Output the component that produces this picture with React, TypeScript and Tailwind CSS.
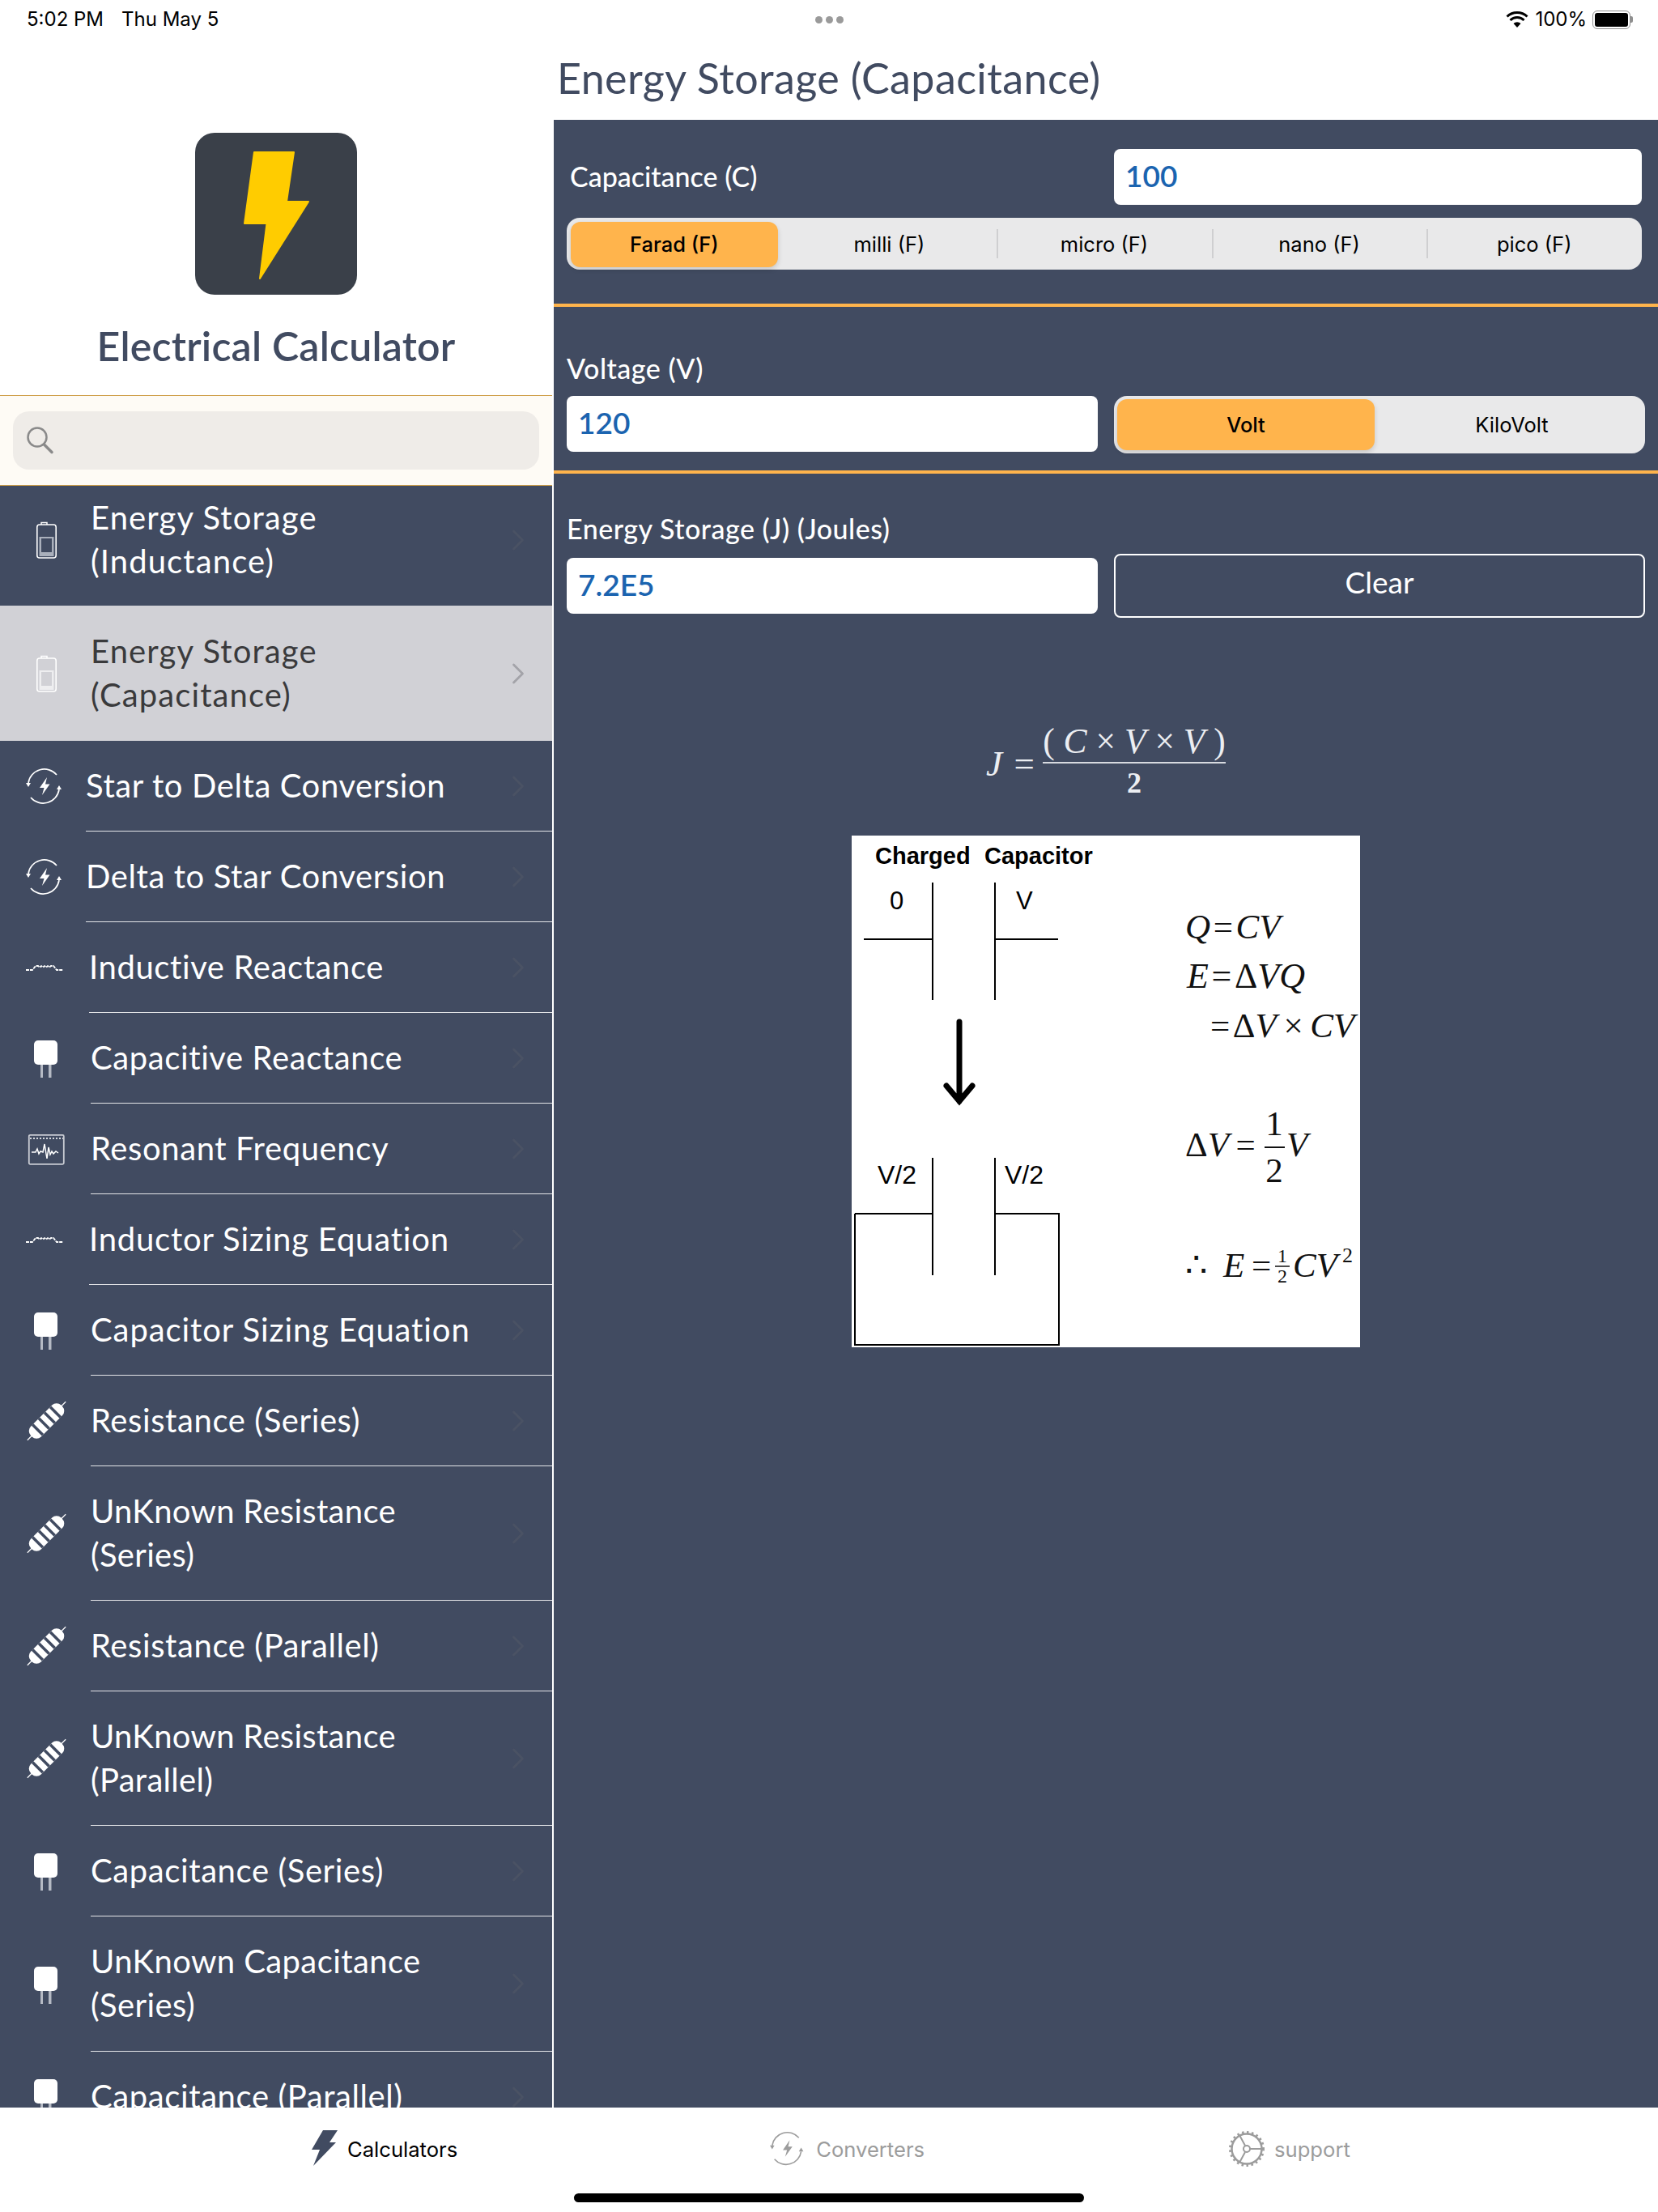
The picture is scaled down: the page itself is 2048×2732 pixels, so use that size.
import React from "react";
import { ChevronRight } from "lucide-react";

const sans = "font-['Lato','Noto_Sans',sans-serif]";
const ui = "font-['Inter','Liberation_Sans',sans-serif]";
const tex = "font-['Liberation_Serif','DejaVu_Serif',serif]";

const BatteryIcon = ({ selected }: { selected?: boolean }) => (
  <svg width="51" height="50" viewBox="0 0 51 50" fill="none">
    <path d="M19 6v-2.500h7V6" stroke="#fff" strokeWidth="1.500" />
    <rect x="13.800" y="6" width="23.400" height="41" rx="3" stroke="#fff" strokeWidth="1.600" />
    <rect x="16.500" y="21" width="18" height="24" fill={selected ? "#eeeef0" : "#aab0bc"} />
    <rect x="19" y="23" width="13" height="17" fill={selected ? "#d1d1d6" : "#414b61"} />
  </svg>
);

const CycleBolt = ({ color = "#fff", size = 51 }: { color?: string; size?: number }) => (
  <svg width={size} height={size * 50 / 51} viewBox="0 0 51 50" fill="none">
    <path d="M3 21a20 20 0 0 1 35-10" stroke={color} strokeWidth="1.700" />
    <path d="M41 29a20 20 0 0 1-35 10" stroke={color} strokeWidth="1.700" />
    <path d="M0 21h6l-3 5zM38 29h6l-3-5z" fill={color} />
    <path d="M26 14l-9 13h5.500l-2.500 9 9.500-13.500h-5.500z" fill={color} />
  </svg>
);

const CoilIcon = () => (
  <svg width="51" height="50" viewBox="0 0 51 50" fill="none">
    <path d="M0 28h8l4-5h3l2 1.500 2-1.500 2 1.500 2-1.500 2 1.500 2-1.500 2 1.500 2-1.500h3l4 5h8" stroke="#fff" strokeWidth="1.800" strokeDasharray="4 1" />
  </svg>
);

const CapacitorIcon = () => (
  <svg width="51" height="50" viewBox="0 0 51 50" fill="none">
    <rect x="10" y="3" width="29" height="30" rx="5" fill="#fff" />
    <rect x="18" y="33" width="3" height="16" fill="#b5bac4" />
    <rect x="28" y="33" width="3.500" height="16" fill="#b5bac4" />
  </svg>
);

const ScopeIcon = () => (
  <svg width="51" height="50" viewBox="0 0 51 50" fill="none">
    <rect x="3.800" y="7.800" width="43" height="36" rx="1.500" stroke="#c9ccd3" strokeWidth="1.800" />
    <path d="M5 12h41" stroke="#d5d8de" strokeWidth="2" strokeDasharray="2 2" />
    <path d="M7 29h5l2-4 2 6 2-3 3 1 2-10 3 18 2-14 2 9 2-4 2 3 3-3 3 2" stroke="#fff" strokeWidth="1.500" />
  </svg>
);

const ResistorIcon = () => (
  <svg width="51" height="52" viewBox="0 0 51 52" fill="none">
    <g transform="rotate(-45 25.500 26)">
      <path d="M-8 26h67" stroke="#fff" strokeWidth="1.300" />
      <rect x="-1" y="17" width="53" height="18" rx="8" fill="#fff" />
      <path d="M10 17v18M21 17v18M31 17v18M41 17v18" stroke="#414b61" strokeWidth="3.500" />
    </g>
  </svg>
);

const SearchGlass = () => (
  <svg width="38" height="38" viewBox="0 0 38 38" fill="none" stroke="#8a8a8a">
    <circle cx="15" cy="15" r="11.500" strokeWidth="2.500" />
    <path d="M23.500 24L33 33.500" strokeWidth="3.500" strokeLinecap="round" />
  </svg>
);

type Row = {
  lines: string[];
  icon: string;
  slot: string;
  height: string;
  track?: string;
  selected?: boolean;
  noLine?: boolean;
};

const rows: Row[] = [
  { lines: ["Energy Storage", "(Inductance)"], icon: "battery", slot: "w-[112px]", height: "h-[162px]", track: "tracking-[1.1px]", noLine: true },
  { lines: ["Energy Storage", "(Capacitance)"], icon: "battery", slot: "w-[112px]", height: "h-[167px]", track: "tracking-[1.1px]", selected: true, noLine: true },
  { lines: ["Star to Delta Conversion"], icon: "cycle", slot: "w-[106px]", height: "h-[112px]" },
  { lines: ["Delta to Star Conversion"], icon: "cycle", slot: "w-[106px]", height: "h-[112px]" },
  { lines: ["Inductive Reactance"], icon: "coil", slot: "w-[110px]", height: "h-[112px]" },
  { lines: ["Capacitive Reactance"], icon: "cap", slot: "w-[112px]", height: "h-[112px]" },
  { lines: ["Resonant Frequency"], icon: "scope", slot: "w-[112px]", height: "h-[112px]" },
  { lines: ["Inductor Sizing Equation"], icon: "coil", slot: "w-[110px]", height: "h-[112px]", track: "tracking-[0.8px]" },
  { lines: ["Capacitor Sizing Equation"], icon: "cap", slot: "w-[112px]", height: "h-[112px]", track: "tracking-[0.9px]" },
  { lines: ["Resistance (Series)"], icon: "res", slot: "w-[112px]", height: "h-[112px]" },
  { lines: ["UnKnown Resistance", "(Series)"], icon: "res", slot: "w-[112px]", height: "h-[166px]", track: "tracking-[0.3px]" },
  { lines: ["Resistance (Parallel)"], icon: "res", slot: "w-[112px]", height: "h-[112px]" },
  { lines: ["UnKnown Resistance", "(Parallel)"], icon: "res", slot: "w-[112px]", height: "h-[166px]", track: "tracking-[0.3px]" },
  { lines: ["Capacitance (Series)"], icon: "cap", slot: "w-[112px]", height: "h-[112px]" },
  { lines: ["UnKnown Capacitance", "(Series)"], icon: "cap", slot: "w-[112px]", height: "h-[167px]", track: "tracking-[0.4px]" },
  { lines: ["Capacitance (Parallel)"], icon: "cap", slot: "w-[112px]", height: "h-[112px]" },
];

const RowIcon = ({ name, selected }: { name: string; selected?: boolean }) => {
  if (name === "battery") return <BatteryIcon selected={selected} />;
  if (name === "cycle") return <CycleBolt />;
  if (name === "coil") return <CoilIcon />;
  if (name === "cap") return <CapacitorIcon />;
  if (name === "scope") return <ScopeIcon />;
  return <ResistorIcon />;
};

const SideRow = ({ row }: { row: Row }) => (
  <div className={`flex shrink-0 ${row.height} ${row.selected ? "bg-[#d1d1d6] text-[#3a3a3c]" : "text-white"}`}>
    <div className={`${row.slot} shrink-0 flex items-center pl-[32px]`}>
      <RowIcon name={row.icon} selected={row.selected} />
    </div>
    <div className={`flex-1 flex items-center justify-between pr-[20px] ${row.noLine ? "" : "border-b border-[#e4e5e8]"}`}>
      <div className={`text-[40px] leading-[54px] pb-[2px] ${row.track ?? "tracking-[0.6px]"}`}>
        {row.lines.map((l) => (
          <div key={l}>{l}</div>
        ))}
      </div>
      <ChevronRight size={44} strokeWidth={1.500} className={row.selected ? "text-[#a3a3a9]" : "text-[#4a5264]"} />
    </div>
  </div>
);

const ValueInput = ({ value, className }: { value: string; className: string }) => (
  <div className={`bg-white rounded-[8px] h-[69px] flex items-center pl-[14px] pb-[4px] text-[#1b64b0] text-[37px] font-semibold ${className} ${sans}`}>
    {value}
  </div>
);

const capUnits = ["Farad (F)", "milli (F)", "micro (F)", "nano (F)", "pico (F)"];

const CapSegment = () => (
  <div className={`mt-[16px] w-[1328px] h-[64px] bg-[#e9e9ea] rounded-[16px] grid grid-cols-5 text-black text-[25.500px] ${ui}`}>
    {capUnits.map((u, i) => (
      <div key={u} className="flex items-center justify-center relative h-full pt-[2px]">
        {i > 1 && <div className="absolute left-0 top-[14px] h-[36px] w-[2px] bg-[#cfcfd1]" />}
        {i === 0 ? (
          <div className="ml-[5px] mr-[5px] w-full h-[56px] bg-[#ffb44c] rounded-[12px] shadow-[0_3px_6px_rgba(0,0,0,0.15)] flex items-center justify-center font-medium">
            {u}
          </div>
        ) : (
          u
        )}
      </div>
    ))}
  </div>
);

const Formula = () => (
  <div className={`mt-[128px] flex justify-center items-center text-[#eceef2] ${tex}`}>
    <div className="w-[70px] flex justify-between pr-[10px] text-[45px] mt-[6px]">
      <i>J</i>
      <span>=</span>
    </div>
    <div className="flex flex-col items-center w-[226px]">
      <div className="h-[52px] w-full border-b-2 border-[#d7dae0] text-[43.500px] leading-[48px] text-center whitespace-nowrap">
        ( <i>C</i> × <i>V</i> × <i>V</i> )
      </div>
      <div className="text-[36px] leading-[48px] font-bold">2</div>
    </div>
  </div>
);

const Diagram = () => (
  <svg width="628" height="632" viewBox="0 0 628 632" className="bg-white">
    <g fontFamily="Liberation Sans, sans-serif" fill="#000">
      <text x="29" y="35" fontSize="29" fontWeight="700">Charged</text>
      <text x="164" y="35" fontSize="29" fontWeight="700">Capacitor</text>
      <text x="47" y="91" fontSize="31">0</text>
      <text x="203" y="91" fontSize="31">V</text>
      <text x="32" y="430" fontSize="32">V/2</text>
      <text x="189" y="430" fontSize="32">V/2</text>
    </g>
    <g stroke="#000" strokeWidth="2" fill="none">
      <path d="M100 58V203M177 58V203M15 128H100M177 128H255" />
      <path d="M100 398V543M177 398V543M4 467H100M177 467H256V629H4V467" />
    </g>
    <path d="M133 230V328M117 309L133 328L149 309" stroke="#000" strokeWidth="7" fill="none" strokeLinecap="round" />
    <g fontFamily="Liberation Serif, serif" fontSize="43" fill="#111">
      <text x="412" y="127"><tspan fontStyle="italic">Q</tspan>{"\u200a=\u200a"}<tspan fontStyle="italic">CV</tspan></text>
      <text x="414" y="188" fontSize="44"><tspan fontStyle="italic">E</tspan>{"\u200a=\u200a"}Δ<tspan fontStyle="italic">VQ</tspan></text>
      <text x="443" y="249">{"=\u200a"}Δ<tspan fontStyle="italic">V</tspan>{"\u2009×\u2009"}<tspan fontStyle="italic">CV</tspan></text>
      <text x="412" y="396">Δ<tspan fontStyle="italic">V</tspan>{"\u2009="}</text>
      <text x="522" y="370" textAnchor="middle">1</text>
      <path d="M510 385H535" stroke="#111" strokeWidth="2" />
      <text x="522" y="428" textAnchor="middle">2</text>
      <text x="537" y="396" fontStyle="italic">V</text>
      <text x="412" y="545">∴</text>
      <text x="459" y="545"><tspan fontStyle="italic">E</tspan>{"\u2009="}</text>
      <text x="532" y="527" textAnchor="middle" fontSize="24">1</text>
      <path d="M523 532H541" stroke="#111" strokeWidth="1.500" />
      <text x="532" y="552" textAnchor="middle" fontSize="24">2</text>
      <text x="545" y="545" fontStyle="italic">CV</text>
      <text x="606" y="527" fontSize="26">2</text>
    </g>
  </svg>
);

const StatusBar = () => (
  <div className={`h-[48px] shrink-0 flex items-center justify-between pl-[33px] pr-[31px] text-black text-[24px] ${ui}`}>
    <div className="w-[400px] flex gap-[22px]">
      <span>5:02 PM</span>
      <span>Thu May 5</span>
    </div>
    <div className="flex gap-[4px] -ml-[2px]">
      <div className="w-[9px] h-[9px] rounded-full bg-[#9a9a9a]" />
      <div className="w-[9px] h-[9px] rounded-full bg-[#9a9a9a]" />
      <div className="w-[9px] h-[9px] rounded-full bg-[#9a9a9a]" />
    </div>
    <div className="w-[400px] flex items-center justify-end gap-[7px]">
      <svg width="30" height="22" viewBox="0 0 30 22">
        <path d="M15 21l-4.500-5a6.500 6.500 0 0 1 9 0z" fill="#000" />
        <path d="M6.500 12a12 12 0 0 1 17 0" stroke="#000" strokeWidth="3" fill="none" />
        <path d="M2.500 7.500a18 18 0 0 1 25 0" stroke="#000" strokeWidth="3" fill="none" />
      </svg>
      <span>100%</span>
      <div className="flex items-center">
        <div className="w-[47px] h-[23px] rounded-[6px] border border-[#8f8f8f] p-[2px]">
          <div className="w-full h-full rounded-[3px] bg-black" />
        </div>
        <div className="w-[3px] h-[8px] rounded-r-[2px] bg-[#8f8f8f]" />
      </div>
    </div>
  </div>
);

const Sidebar = () => (
  <div className="w-[682px] shrink-0 flex flex-col">
    <div className="h-[440px] shrink-0 flex flex-col items-center pt-[116px]">
      <div className="w-[200px] h-[200px] rounded-[24px] bg-[#3a4049] shrink-0">
        <svg width="200" height="200" viewBox="0 0 200 200">
          <path d="M73 24H122L113 85H140L80 180L88.500 112H61Z" fill="#ffcc00" stroke="#ffcc00" strokeWidth="2" strokeLinejoin="round" />
        </svg>
      </div>
      <div className={`mt-[30px] text-[50px] leading-[66px] font-semibold tracking-[0.2px] text-[#414b61] ${sans}`}>Electrical Calculator</div>
    </div>
    <div className="h-[112px] shrink-0 bg-[#fefbf5] border-y border-[#cf9f48] px-[16px] pt-[19px]">
      <div className="h-[72px] rounded-[20px] bg-[#efecE8] flex items-center pl-[15px]">
        <SearchGlass />
      </div>
    </div>
    <div className={`flex-1 overflow-hidden bg-[#414b61] ${sans}`}>
      <div className="-mt-[14px] flex flex-col">
        {rows.map((r, i) => (
          <SideRow key={i} row={r} />
        ))}
      </div>
    </div>
  </div>
);

const MainPanel = () => (
  <div className="flex-1 flex flex-col ml-[2px]">
    <div className={`h-[100px] shrink-0 flex items-center pl-[4px] pb-[4px] text-[52px] tracking-[0.4px] text-[#414b61] ${sans}`}>
      Energy Storage (Capacitance)
    </div>
    <div className={`flex-1 bg-[#414b61] text-white ${sans}`}>
      <div className="h-[231px] border-b-4 border-[#ffb44c] pt-[36px] pl-[16px]">
        <div className="flex items-center">
          <div className="w-[676px] pl-[4px] pb-[2px] text-[34px] font-medium">Capacitance (C)</div>
          <ValueInput value="100" className="w-[652px]" />
        </div>
        <CapSegment />
      </div>
      <div className="h-[206px] border-b-4 border-[#ffb44c] pt-[56px] px-[16px]">
        <div className="text-[34px] leading-[40px] tracking-[0.5px] font-medium">Voltage (V)</div>
        <div className="mt-[14px] flex gap-[20px]">
          <ValueInput value="120" className="w-[656px]" />
          <div className={`w-[656px] h-[71px] bg-[#e9e9ea] rounded-[16px] p-[4px] flex text-black text-[25.500px] ${ui}`}>
            <div className="w-[318px] bg-[#ffb44c] rounded-[12px] shadow-[0_3px_6px_rgba(0,0,0,0.15)] flex items-center justify-center font-medium pt-[2px]">Volt</div>
            <div className="flex-1 flex items-center justify-center pl-[9px] pt-[2px]">KiloVolt</div>
          </div>
        </div>
      </div>
      <div className="pt-[48px] px-[16px]">
        <div className="text-[34px] leading-[40px] tracking-[0.5px] font-medium">Energy Storage (J) (Joules)</div>
        <div className="flex gap-[20px] items-center mt-[11px]">
          <ValueInput value="7.2E5" className="w-[656px]" />
          <div className="w-[656px] h-[79px] rounded-[8px] border-2 border-white flex items-center justify-center text-[37px] pb-[10px]">Clear</div>
        </div>
      </div>
      <Formula />
      <div className="mt-[41px] flex justify-center">
        <Diagram />
      </div>
    </div>
  </div>
);

const TabBar = () => (
  <div className={`h-[129px] shrink-0 flex flex-col text-[25.600px] ${ui}`}>
    <div className="flex items-center h-[44px] mt-[29px] pl-[385px]">
      <svg width="32" height="44" viewBox="0 0 32 44" className="-mt-[2px]">
        <path d="M14 0H32L22 15H30L2 44L10 24H0Z" fill="#414b61" />
      </svg>
      <span className="ml-[12px] pt-[2px] text-black">Calculators</span>
      <div className="ml-[386px] flex items-center text-[#9c9c9c]">
        <CycleBolt color="#9c9c9c" size={48} />
        <span className="ml-[9px] pt-[2px]">Converters</span>
      </div>
      <div className="ml-[376px] flex items-center text-[#9c9c9c]">
        <svg width="44" height="44" viewBox="0 0 44 44" fill="none" stroke="#9c9c9c">
          <circle cx="22" cy="22" r="18.500" strokeWidth="2.500" />
          <circle cx="22" cy="22" r="20.500" strokeWidth="3" strokeDasharray="2.500 3.500" />
          <circle cx="22" cy="22" r="4" strokeWidth="2" />
          <path d="M26 22H40M20 18L13 5M20 26L13 39" strokeWidth="2" />
        </svg>
        <span className="ml-[12px] pt-[2px]">support</span>
      </div>
    </div>
    <div className="mt-[33px] mx-auto w-[630px] h-[11px] rounded-full bg-black" />
  </div>
);

export default function App() {
  return (
    <div className="w-[2048px] h-[2732px] bg-white flex flex-col overflow-hidden">
      <StatusBar />
      <div className="flex-1 min-h-0 flex">
        <Sidebar />
        <MainPanel />
      </div>
      <TabBar />
    </div>
  );
}
